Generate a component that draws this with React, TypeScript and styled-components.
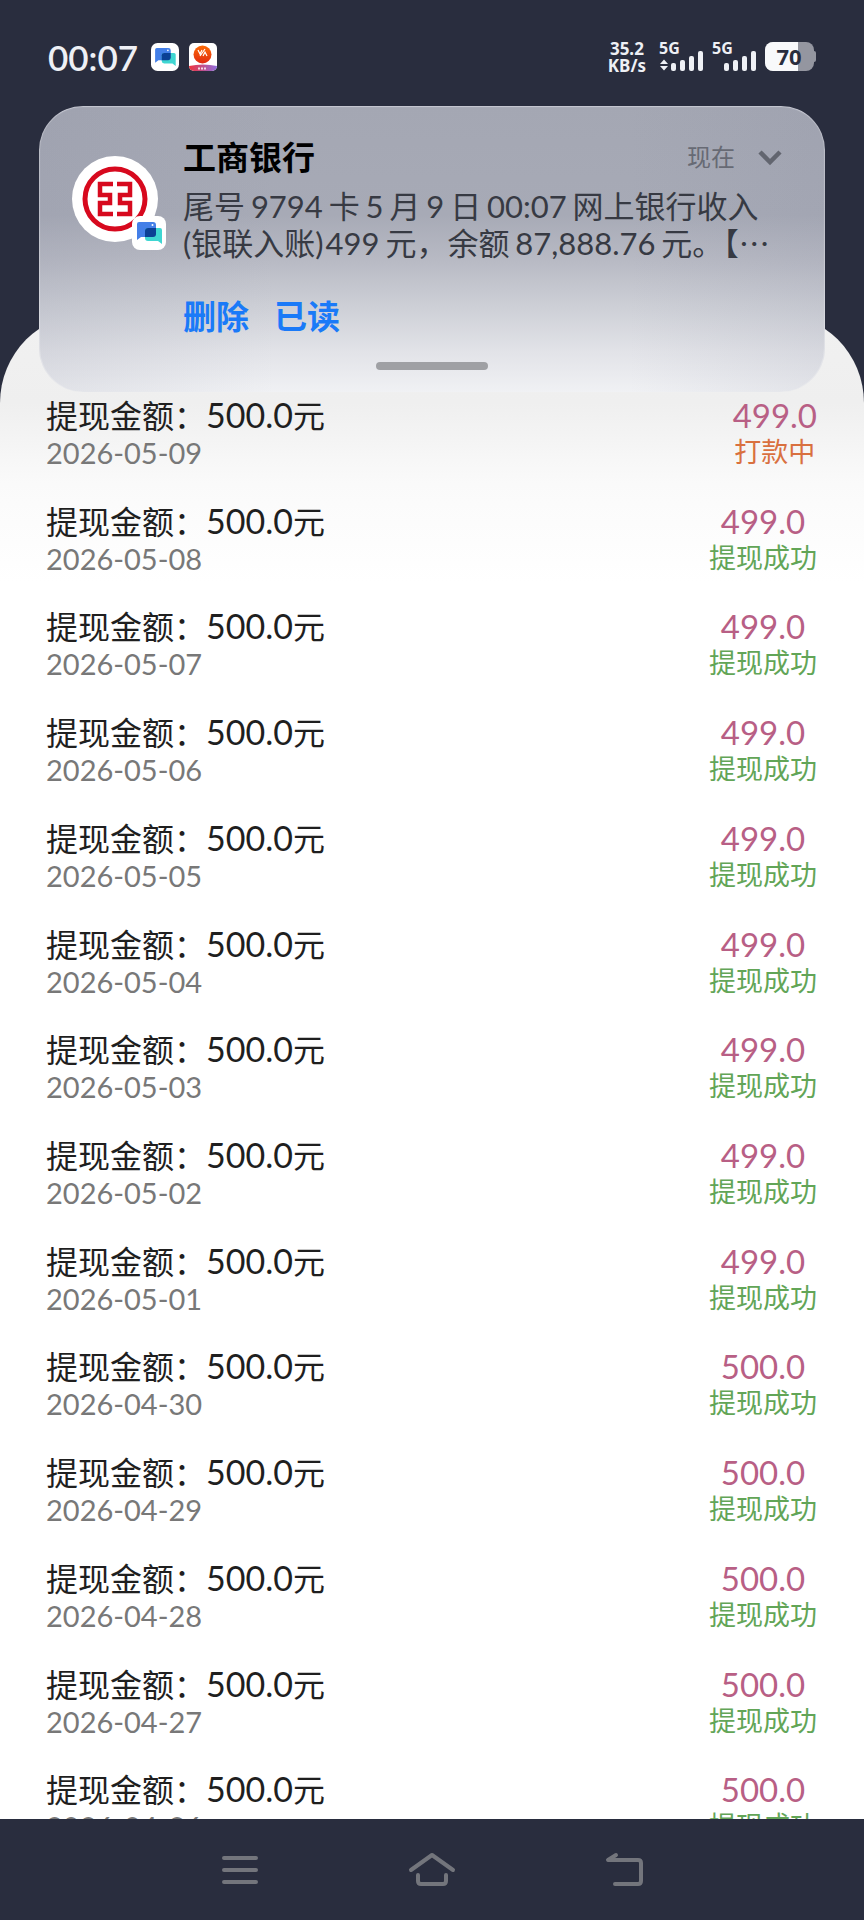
import React from "react";
import styled, { createGlobalStyle } from "styled-components";

const latin = `Lato, "Noto Sans CJK SC", sans-serif`;

const GlobalStyle = createGlobalStyle`
  *, *::before, *::after { box-sizing: border-box; }
  html, body, #root { height: 100%; }
  body { margin: 0; background: #292d3e; font-family: ${latin}; }
  ul, h1, h2, p { margin: 0; padding: 0; font-weight: 400; }
  ul { list-style: none; }
  button { border: 0; padding: 0; background: none; font-family: inherit; cursor: pointer; }
  svg { display: block; overflow: visible; }
`;

const Screen = styled.div`
  height: 100vh;
  display: flex;
  flex-direction: column;
  overflow: hidden;
  background: #292d3e;
`;

const StatusBar = styled.header`
  height: 106px;
  flex: none;
  display: flex;
  align-items: center;
  justify-content: space-between;
  padding: 8px 48px 0;
  color: #eef0f5;
`;

const StatusGroup = styled.div<{ $gap: number }>`
  display: flex;
  align-items: center;
  gap: ${(p) => p.$gap}px;
`;

const Clock = styled.time`
  font-size: 35px;
  line-height: 35px;
  font-weight: 600;
  margin-right: 3px;
`;

const NetSpeed = styled.div`
  display: grid;
  margin-right: 5px;
  font-family: "Noto Sans", sans-serif;
  font-size: 17px;
  line-height: 17px;
  font-weight: 700;
  text-align: center;
`;

const Banner = styled.section`
  position: relative;
  z-index: 1;
  flex: none;
  margin: 0 39px;
  height: 286px;
  border-radius: 44px;
  padding: 30px 40px 0 33px;
  display: grid;
  grid-template-columns: 86px 1fr;
  column-gap: 25px;
  background:
    linear-gradient(90deg, rgba(130, 134, 155, 0.14), rgba(130, 134, 155, 0) 30%, rgba(130, 134, 155, 0) 75%, rgba(130, 134, 155, 0.12)),
    linear-gradient(#a4a7b3 0%, #a7aab6 38%, #b8bac4 54%, #cdcfd6 70%, #e2e3e8 86%, #f0f1f4 100%);
  box-shadow: inset 0 2px 1px -1px #c6c8d2, inset 1px 0 1px rgba(255, 255, 255, 0.3), inset -1px 0 1px rgba(255, 255, 255, 0.3);
`;

const Avatar = styled.div`
  position: relative;
  margin-top: 20px;
  width: 86px;
  height: 86px;
`;

const AppBadge = styled.span`
  position: absolute;
  right: -8px;
  bottom: -8px;
`;

const BannerHead = styled.div`
  display: flex;
  align-items: center;
  height: 42px;
`;

const Sender = styled.h1`
  flex: 1;
  font-size: 33px;
  line-height: 40px;
  font-weight: 700;
  color: #000;
`;

const When = styled.time`
  font-size: 24px;
  line-height: 32px;
  color: #676a74;
  margin-right: 20px;
`;

const Message = styled.p`
  margin-top: 10px;
  font-size: 31px;
  line-height: 37px;
  white-space: nowrap;
  text-autospace: normal;
  color: #373a43;
`;

const Num = styled.span`
  margin: 0 2px;
`;

const Actions = styled.div`
  display: flex;
  gap: 25px;
  margin-top: 34px;
`;

const ActionButton = styled.button`
  font-size: 33px;
  line-height: 40px;
  font-weight: 700;
  color: #1a7af8;
`;

const Grabber = styled.span`
  position: absolute;
  left: 50%;
  bottom: 22px;
  width: 112px;
  height: 8px;
  margin-left: -56px;
  border-radius: 4px;
  background: #9fa0a4;
`;

const Sheet = styled.main`
  flex: 1;
  min-height: 0;
  margin-top: -79px;
  padding-top: 79px;
  overflow: hidden;
  border-radius: 90px 90px 0 0;
  background: linear-gradient(#f1f1f1 0, #efefef 90px, #fafafa 170px, #fff 270px);
`;

const Records = styled.ul`
  height: calc(100% + 53px);
  display: grid;
  grid-auto-rows: 1fr;
`;

const Record = styled.li`
  display: flex;
  justify-content: space-between;
  padding: 4px 47px 0 46px;
  white-space: nowrap;
`;

const Title = styled.h2`
  font-size: 32px;
  line-height: 38px;
  color: #1f1f1f;
`;

const Sum = styled.span`
  font-size: 34px;
`;

const DateText = styled.time`
  display: block;
  font-size: 29px;
  line-height: 36px;
  color: #787878;
`;

const Result = styled.div`
  text-align: center;
`;

const Amount = styled.p`
  font-size: 33px;
  line-height: 38px;
  color: #b85f85;
`;

const State = styled.p<{ $pending: boolean }>`
  font-size: 27px;
  line-height: 36px;
  color: ${(p) => (p.$pending ? "#d9703f" : "#62a557")};
`;

const NavBar = styled.nav`
  flex: none;
  height: 101px;
  display: flex;
  align-items: center;
  justify-content: center;
  gap: 144px;
  background: #292d3e;
`;

const NavButton = styled.button`
  width: 48px;
  height: 48px;
`;

const ChatIcon = ({ size }: { size: number }) => (
  <svg width={size} height={size} viewBox="0 0 34 34">
    <rect width="34" height="34" rx="8" fill="#fff" />
    <path d="M7 6h14q3 0 3 3v9q0 3-3 3H9l-4 3V8q0-2 2-2z" fill="#437fe8" />
    <path d="M16 12h12q2 0 2 2v14l-4-3H16q-3 0-3-3v-7q0-3 3-3z" fill="#3fd6d2" />
    <path d="M16 12h8v6q0 3-3 3h-8v-6q0-3 3-3z" fill="#0b4095" />
    <circle cx="20.500" cy="9" r="1" fill="#fff" />
  </svg>
);

const PayIcon = () => (
  <svg width="28" height="28" viewBox="0 0 28 28">
    <defs>
      <linearGradient id="ball" x1="0" y1="0" x2="0" y2="1">
        <stop offset="0" stopColor="#fb6a05" />
        <stop offset="1" stopColor="#e02a12" />
      </linearGradient>
      <linearGradient id="strip">
        <stop offset="0" stopColor="#f0323c" />
        <stop offset="1" stopColor="#8f6fe0" />
      </linearGradient>
      <clipPath id="tile"><rect width="28" height="28" rx="5" /></clipPath>
    </defs>
    <g clipPath="url(#tile)">
      <rect width="28" height="28" fill="#fff" />
      <path d="M0 23q14-3 28 0v5H0z" fill="url(#strip)" />
      <circle cx="13.500" cy="11.500" r="9" fill="url(#ball)" />
      <path d="M9 7l2 4 2-4M11 13l5-7M14 13l2-4 2 4" stroke="#fff" strokeWidth="1.200" fill="none" />
      <path d="M9 25.500h9" stroke="#fff" strokeOpacity="0.8" strokeWidth="2" strokeDasharray="2 1" />
    </g>
  </svg>
);

const BankIcon = () => (
  <svg width="86" height="86" viewBox="0 0 86 86">
    <circle cx="43" cy="43" r="43" fill="#fff" />
    <circle cx="43" cy="43" r="30" fill="none" stroke="#d7091e" strokeWidth="5" />
    <path
      d="M41 28H28v11h10v8H28v11h13M45 28h13v11H48v8h10v11H45"
      fill="none" stroke="#d7091e" strokeWidth="4.500"
    />
  </svg>
);

const Signal = ({ arrows }: { arrows?: boolean }) => (
  <svg width="45" height="30" viewBox="0 0 45 30" fill="#eef0f5">
    <text x="0" y="12" fontFamily="Noto Sans" fontSize="16" fontWeight="700">5G</text>
    {arrows && <path d="M1 22l4-4.500 4 4.500zM1 24l4 4.500 4-4.500z" />}
    <rect x="12" y="21" width="5" height="8" rx="2" />
    <rect x="21" y="18" width="5" height="11" rx="2" />
    <rect x="30" y="14" width="5" height="15" rx="2" />
    <rect x="39" y="9" width="5" height="20" rx="2" />
  </svg>
);

const Battery = () => (
  <svg width="51" height="30" viewBox="0 0 51 30">
    <defs><clipPath id="cell"><rect width="49" height="29" rx="8" /></clipPath></defs>
    <rect x="45" y="9" width="6" height="11" rx="2" fill="#9496a0" />
    <g clipPath="url(#cell)">
      <rect width="49" height="29" fill="#9496a0" />
      <rect width="33" height="29" fill="#f8f9fb" />
    </g>
    <text x="24" y="23" textAnchor="middle" fontFamily="Noto Sans" fontSize="22" fontWeight="700" fill="#292d3e">70</text>
  </svg>
);

const stroke = { fill: "none", stroke: "#73757c", strokeWidth: 4, strokeLinecap: "round", strokeLinejoin: "round" } as const;

const records: [string, string][] = [
  ["2026-05-09", "499.0"],
  ["2026-05-08", "499.0"],
  ["2026-05-07", "499.0"],
  ["2026-05-06", "499.0"],
  ["2026-05-05", "499.0"],
  ["2026-05-04", "499.0"],
  ["2026-05-03", "499.0"],
  ["2026-05-02", "499.0"],
  ["2026-05-01", "499.0"],
  ["2026-04-30", "500.0"],
  ["2026-04-29", "500.0"],
  ["2026-04-28", "500.0"],
  ["2026-04-27", "500.0"],
  ["2026-04-26", "500.0"],
];

export default function App() {
  return (
    <Screen lang="zh-CN">
      <GlobalStyle />
      <StatusBar>
        <StatusGroup $gap={10}>
          <Clock>00:07</Clock>
          <ChatIcon size={28} />
          <PayIcon />
        </StatusGroup>
        <StatusGroup $gap={8}>
          <NetSpeed>
            <span>35.2</span>
            <span>KB/s</span>
          </NetSpeed>
          <Signal arrows />
          <Signal />
          <Battery />
        </StatusGroup>
      </StatusBar>
      <Banner>
        <Avatar>
          <BankIcon />
          <AppBadge><ChatIcon size={34} /></AppBadge>
        </Avatar>
        <div>
          <BannerHead>
            <Sender>工商银行</Sender>
            <When>现在</When>
            <button aria-label="展开">
              <svg width="30" height="24" viewBox="0 0 30 24">
                <path d="M5 7l10 10 10-10" fill="none" stroke="#62656f" strokeWidth="4.500" />
              </svg>
            </button>
          </BannerHead>
          <Message>
            尾号<Num>9794</Num>卡<Num>5</Num>月<Num>9</Num>日<Num>00:07</Num>网上银行收入<br />
            (银联入账)<Num>499</Num>元，余额<Num>87,888.76</Num>元。【⋯
          </Message>
          <Actions>
            <ActionButton>删除</ActionButton>
            <ActionButton>已读</ActionButton>
          </Actions>
        </div>
        <Grabber />
      </Banner>
      <Sheet>
        <Records>
          {records.map(([date, amount], i) => (
            <Record key={date}>
              <div>
                <Title>提现金额：<Sum>500.0</Sum>元</Title>
                <DateText>{date}</DateText>
              </div>
              <Result>
                <Amount>{amount}</Amount>
                <State $pending={i === 0}>{i === 0 ? "打款中" : "提现成功"}</State>
              </Result>
            </Record>
          ))}
        </Records>
      </Sheet>
      <NavBar>
        <NavButton aria-label="菜单">
          <svg width="48" height="48" viewBox="0 0 48 48">
            <path d="M8 12h32M8 24h32M8 36h32" {...stroke} />
          </svg>
        </NavButton>
        <NavButton aria-label="主页">
          <svg width="48" height="48" viewBox="0 0 48 48">
            <path d="M3 24L24 9l21 15M10 29v6q0 3 3 3h22q3 0 3-3v-6" {...stroke} />
          </svg>
        </NavButton>
        <NavButton aria-label="返回">
          <svg width="48" height="48" viewBox="0 0 48 48">
            <path d="M16 9l-8 5h30q3 0 3 3v18q0 3-3 3H15" {...stroke} />
          </svg>
        </NavButton>
      </NavBar>
    </Screen>
  );
}
